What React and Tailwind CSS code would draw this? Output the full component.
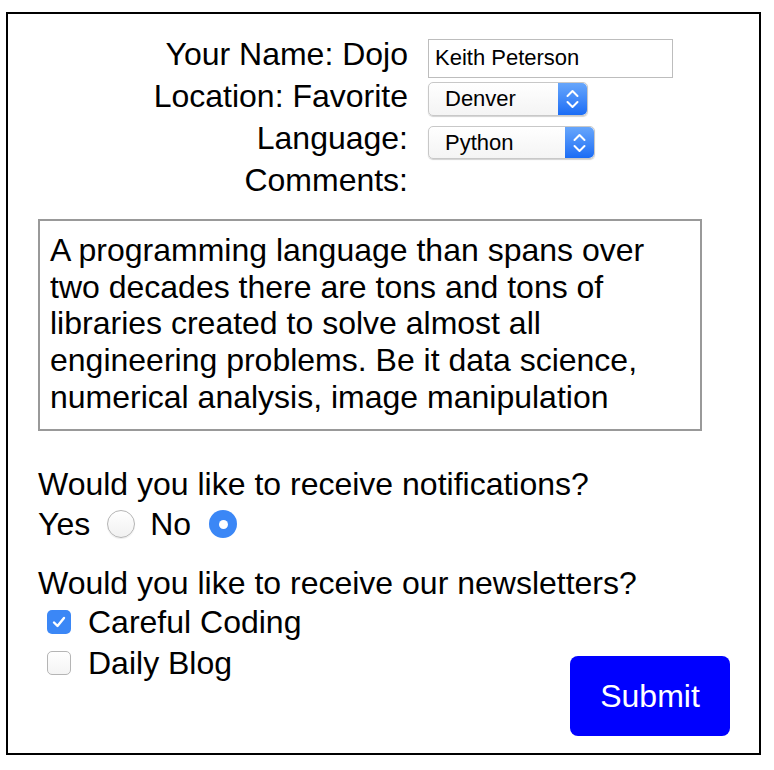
import { useState } from 'react';

function Select({ value, width }) {
  return (
    <div
      className={`flex h-full rounded-[5px] border border-[#c8c8c8] bg-gradient-to-b from-white to-[#f4f4f4] shadow-[0_1px_1px_rgba(0,0,0,0.18)] ${width}`}
    >
      <div className="flex-1 pl-[16px] text-[22px] leading-none flex items-center">{value}</div>
      <div className="w-[29px] rounded-r-[5px] bg-gradient-to-b from-[#67a6fb] to-[#1a6cf5] flex items-center justify-center">
        <svg width="29" height="32" viewBox="0 0 29 32" fill="none">
          <path d="M9.5 13 L14.5 8 L19.5 13" stroke="white" strokeWidth="2" strokeLinecap="round" strokeLinejoin="round" />
          <path d="M9.5 19 L14.5 24 L19.5 19" stroke="white" strokeWidth="2" strokeLinecap="round" strokeLinejoin="round" />
        </svg>
      </div>
    </div>
  );
}

function Radio({ checked }) {
  if (checked) {
    return (
      <span className="shrink-0 w-[28px] h-[28px] rounded-full bg-[#3b87f6] flex items-center justify-center">
        <span className="w-[9px] h-[9px] rounded-full bg-white" />
      </span>
    );
  }
  return (
    <span className="shrink-0 w-[28px] h-[28px] rounded-full border border-[#b5b5b5] bg-gradient-to-b from-white to-[#f1f1f1] shadow-[0_1px_1px_rgba(0,0,0,0.08)]" />
  );
}

function Checkbox({ checked }) {
  if (checked) {
    return (
      <span className="shrink-0 w-[24px] h-[24px] rounded-[5px] bg-[#3b87f6] flex items-center justify-center">
        <svg width="18" height="18" viewBox="0 0 18 18" fill="none">
          <path d="M4 9.5 L7.5 13 L14 5" stroke="white" strokeWidth="2.4" strokeLinecap="round" strokeLinejoin="round" />
        </svg>
      </span>
    );
  }
  return (
    <span className="shrink-0 w-[24px] h-[24px] rounded-[5px] border border-[#b5b5b5] bg-gradient-to-b from-white to-[#f4f4f4]" />
  );
}

export default function App() {
  const [name, setName] = useState('Keith Peterson');

  return (
    <div className="ml-[6px] mt-[12px] w-[755px] h-[743px] border-2 border-black flex flex-col text-black font-['Liberation_Sans',Arial,sans-serif]">
      {/* Top fields */}
      <div className="pt-[19px] grid grid-cols-[400px_1fr] gap-x-[20px] auto-rows-[42px] text-[32px] leading-[42px]">
        <div className="text-right">Your Name: Dojo</div>
        <div>
          <input
            value={name}
            onChange={(e) => setName(e.target.value)}
            className="mt-[3px] w-[245px] h-[39px] border border-[#bdbdbd] px-[6px] text-[22px] outline-none"
          />
        </div>
        <div className="text-right">Location: Favorite</div>
        <div className="pt-[7px] h-[41px]">
          <Select value="Denver" width="w-[160px]" />
        </div>
        <div className="text-right">Language:</div>
        <div className="pt-[9px] h-[42px]">
          <Select value="Python" width="w-[167px]" />
        </div>
        <div className="text-right">Comments:</div>
        <div />
      </div>

      {/* Comments */}
      <div className="mt-[18px] ml-[30px] w-[664px] h-[212px] border-2 border-[#999999] px-[10px] pt-[11px] text-[32px] leading-[36.7px]">
        A programming language than spans over two decades there are tons and tons of libraries created to solve almost all engineering problems. Be it data science, numerical analysis, image manipulation
      </div>

      {/* Notifications */}
      <div className="mt-[33px] pl-[30px] text-[32px]">
        <div className="h-[40px] leading-[40px]">Would you like to receive notifications?</div>
        <div className="h-[40px] flex items-center">
          <span className="leading-[40px]">Yes</span>
          <span className="ml-[17px] flex"><Radio /></span>
          <span className="ml-[15px] leading-[40px]">No</span>
          <span className="ml-[18px] flex"><Radio checked /></span>
        </div>
        <div className="mt-[20px] h-[38px] leading-[38px]">Would you like to receive our newsletters?</div>
      </div>

      {/* Newsletters + submit */}
      <div className="flex-1 flex justify-between pl-[30px] text-[32px]">
        <div className="flex flex-col">
          <div className="h-[40px] flex items-center">
            <span className="ml-[9px] flex"><Checkbox checked /></span>
            <span className="ml-[17px] leading-[40px]">Careful Coding</span>
          </div>
          <div className="h-[42px] flex items-center">
            <span className="ml-[9px] flex"><Checkbox /></span>
            <span className="ml-[17px] leading-[42px]">Daily Blog</span>
          </div>
        </div>
        <button className="self-end mr-[29px] mb-[17px] w-[160px] h-[80px] rounded-[8px] bg-[#0000ff] text-white text-[32px]">
          Submit
        </button>
      </div>
    </div>
  );
}
